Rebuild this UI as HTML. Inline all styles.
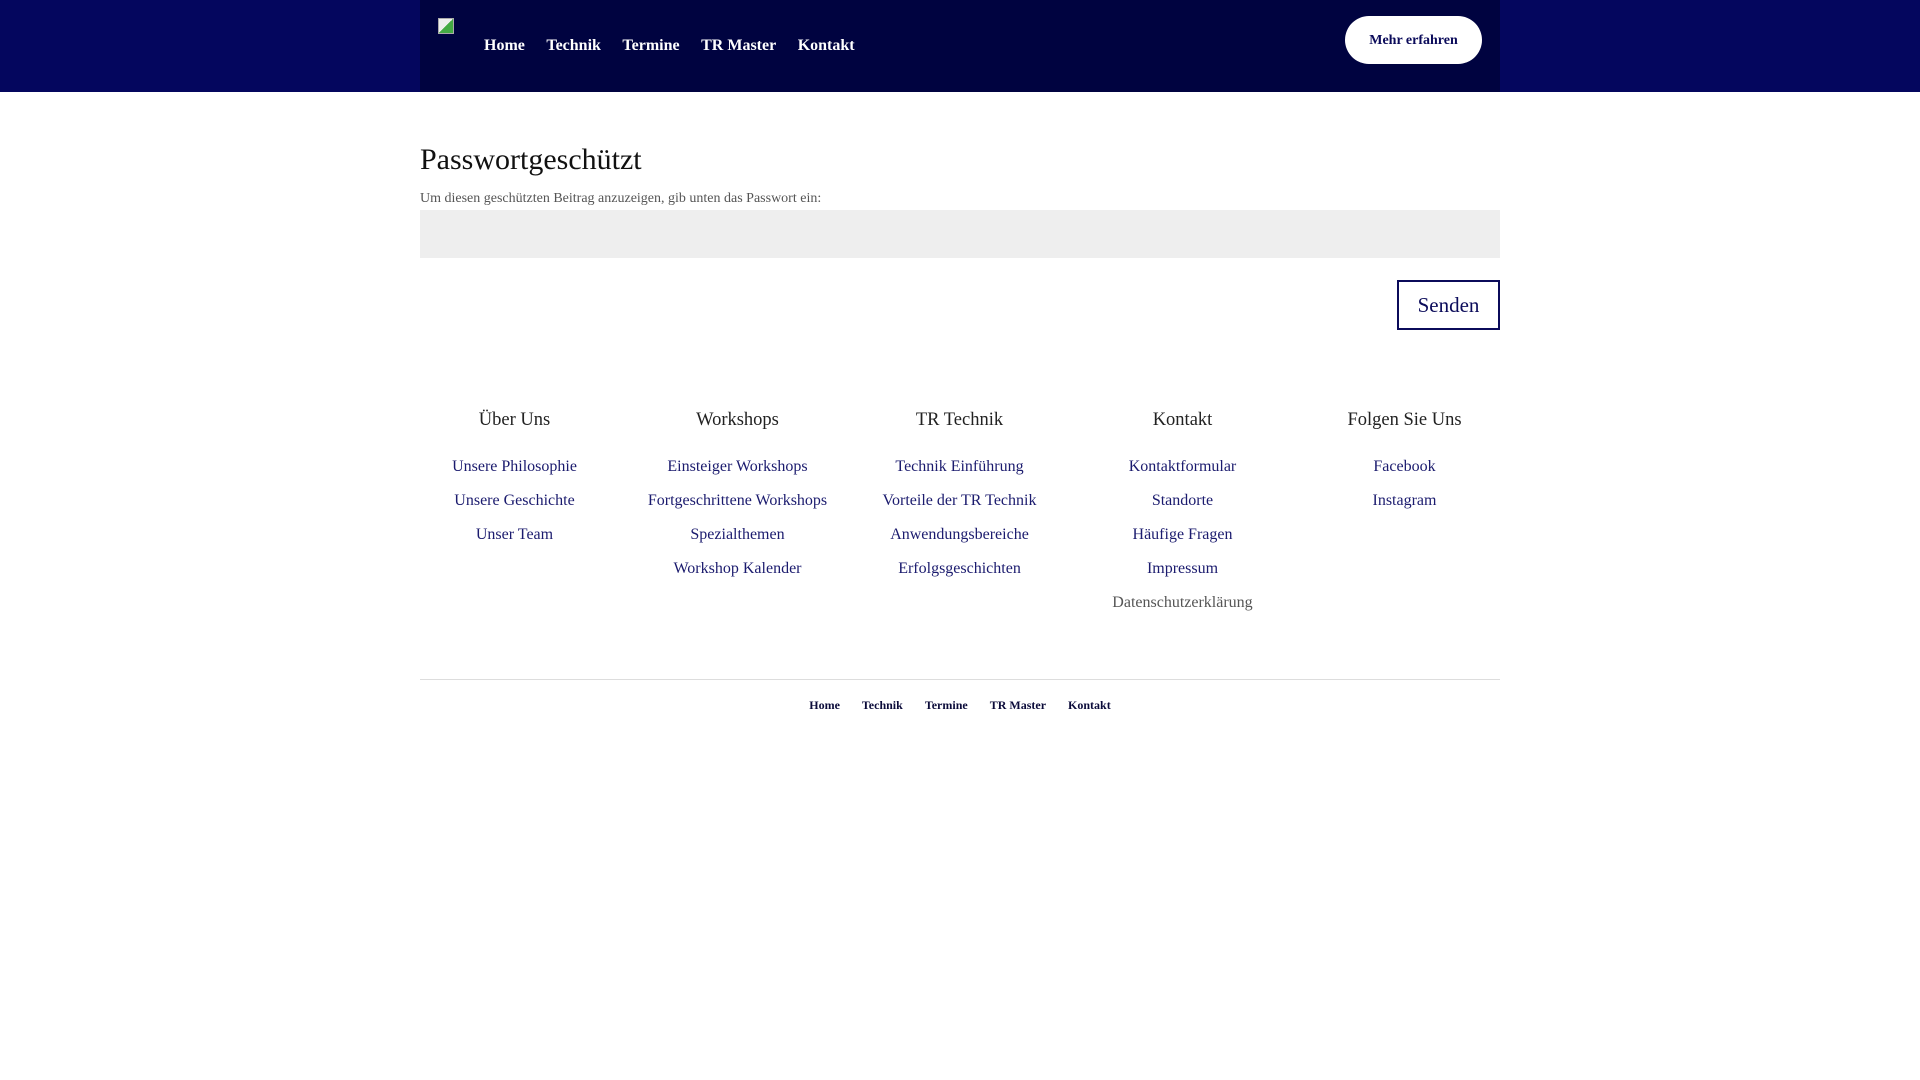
<!DOCTYPE html>
<html><head><meta charset="utf-8"><style>
*{margin:0;padding:0;box-sizing:border-box}
body{width:1920px;height:1080px;background:#fff;font-family:"Liberation Serif",serif;position:relative;overflow:hidden}
.hdr{position:absolute;left:0;top:0;width:1920px;height:92px;background:#04065e}
.hin{position:absolute;left:420px;top:0;width:1080px;height:92px;background:#000340}
.img{position:absolute;left:438px;top:18px;width:16px;height:16px;border:1px solid #aaa;background:linear-gradient(135deg,#eee 50%,#4a4 50%)}
.nav{position:absolute;top:37px;left:484px;color:#fff;font-weight:bold;font-size:16px}
.nav span{margin-right:21.5px}
.btn{position:absolute;left:1345px;top:16px;width:137px;height:48px;border-radius:24px;background:#fff;color:#0b0b5a;font-weight:bold;font-size:14px;text-align:center;line-height:49px}
h1{position:absolute;left:420px;top:143px;font-weight:normal;font-size:30px;color:#111}
.sub{position:absolute;left:420px;top:191px;font-size:14px;color:#555}
.inp{position:absolute;left:420px;top:210px;width:1080px;height:48px;background:#eee}
.send{position:absolute;left:1397px;top:280px;width:103px;height:50px;border:2px solid #0b0b5a;color:#0b0b5a;font-size:21px;text-align:center;line-height:46px}
.col{position:absolute;top:410px;width:223px;text-align:center}
.col h3{font-weight:normal;font-size:18.5px;color:#222;height:47px}
.col a{display:block;font-size:16px;color:#1b1b6e;text-decoration:none;height:34px;line-height:20px}
.col a.g{color:#555}
.line{position:absolute;left:420px;top:679px;width:1080px;height:1px;background:#ddd}
.bn{position:absolute;top:698px;left:0;width:1920px;text-align:center;font-size:12px;font-weight:bold;color:#0b0b3a}
.bn span{margin:0 11px}
</style></head><body>
<div class="hdr"><div class="hin"></div></div>
<div class="img"></div>
<div class="nav"><span>Home</span><span>Technik</span><span>Termine</span><span>TR Master</span><span>Kontakt</span></div>
<div class="btn">Mehr erfahren</div>
<h1>Passwortgeschützt</h1>
<div class="sub">Um diesen geschützten Beitrag anzuzeigen, gib unten das Passwort ein:</div>
<div class="inp"></div>
<div class="send">Senden</div>
<div class="col" style="left:403px"><h3>Über Uns</h3><a>Unsere Philosophie</a><a>Unsere Geschichte</a><a>Unser Team</a></div>
<div class="col" style="left:626px"><h3>Workshops</h3><a>Einsteiger Workshops</a><a>Fortgeschrittene Workshops</a><a>Spezialthemen</a><a>Workshop Kalender</a></div>
<div class="col" style="left:848px"><h3>TR Technik</h3><a>Technik Einführung</a><a>Vorteile der TR Technik</a><a>Anwendungsbereiche</a><a>Erfolgsgeschichten</a></div>
<div class="col" style="left:1071px"><h3>Kontakt</h3><a>Kontaktformular</a><a>Standorte</a><a>Häufige Fragen</a><a>Impressum</a><a class="g">Datenschutzerklärung</a></div>
<div class="col" style="left:1293px"><h3>Folgen Sie Uns</h3><a>Facebook</a><a>Instagram</a></div>
<div class="line"></div>
<div class="bn"><span>Home</span><span>Technik</span><span>Termine</span><span>TR Master</span><span>Kontakt</span></div>
</body></html>
